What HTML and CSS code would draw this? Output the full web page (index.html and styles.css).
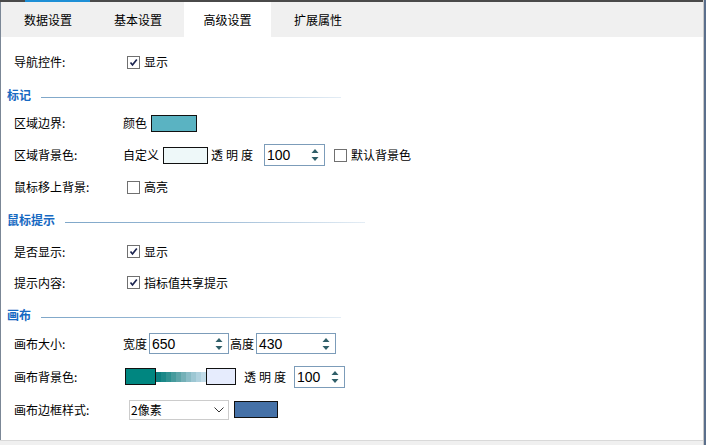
FILE: index.html
```html
<!DOCTYPE html>
<html>
<head>
<meta charset="utf-8">
<link rel="stylesheet" href="styles.css">
</head>
<body>
<div class="frame">
  <div class="topbar"><span class="topbar-accent"></span></div>
  <div class="tabs">
    <div class="tab">数据设置</div>
    <div class="tab">基本设置</div>
    <div class="tab active">高级设置</div>
    <div class="tab">扩展属性</div>
  </div>
  <div class="content">
    <div class="row">
      <div class="label">导航控件:</div>
      <span class="cb checked cb-first"><svg viewBox="0 0 11 11"><path d="M2.5 5.5 L4.5 8 L8.8 2.5"/></svg></span>
      <span class="txt">显示</span>
    </div>

    <div class="heading"><span class="htext">标记</span><span class="hline"></span></div>
    <div class="row">
      <div class="label">区域边界:</div>
      <span class="txt">颜色</span>
      <span class="swatch sw-border"></span>
    </div>
    <div class="row">
      <div class="label">区域背景色:</div>
      <span class="txt">自定义</span>
      <span class="swatch sw-bg"></span>
      <span class="txt spaced">透明度</span>
      <span class="spin spin-60"><span class="num">100</span><span class="arrows"><svg viewBox="0 0 8 14"><polygon points="0.5,5 4,1 7.5,5"/><polygon points="0.5,9 4,13 7.5,9"/></svg></span></span>
      <span class="cb cb-default"></span>
      <span class="txt">默认背景色</span>
    </div>
    <div class="row">
      <div class="label">鼠标移上背景:</div>
      <span class="cb cb-first"></span>
      <span class="txt">高亮</span>
    </div>

    <div class="heading heading-tip"><span class="htext">鼠标提示</span><span class="hline"></span></div>
    <div class="row row-tip">
      <div class="label">是否显示:</div>
      <span class="cb checked cb-first"><svg viewBox="0 0 11 11"><path d="M2.5 5.5 L4.5 8 L8.8 2.5"/></svg></span>
      <span class="txt">显示</span>
    </div>
    <div class="row row-tip">
      <div class="label">提示内容:</div>
      <span class="cb checked cb-first"><svg viewBox="0 0 11 11"><path d="M2.5 5.5 L4.5 8 L8.8 2.5"/></svg></span>
      <span class="txt">指标值共享提示</span>
    </div>

    <div class="heading"><span class="htext">画布</span><span class="hline"></span></div>
    <div class="row row-canvas">
      <div class="label">画布大小:</div>
      <span class="txt">宽度</span>
      <span class="spin spin-80 spin-tight"><span class="num">650</span><span class="arrows"><svg viewBox="0 0 8 14"><polygon points="0.5,5 4,1 7.5,5"/><polygon points="0.5,9 4,13 7.5,9"/></svg></span></span>
      <span class="txt">高度</span>
      <span class="spin spin-80 spin-tight"><span class="num">430</span><span class="arrows"><svg viewBox="0 0 8 14"><polygon points="0.5,5 4,1 7.5,5"/><polygon points="0.5,9 4,13 7.5,9"/></svg></span></span>
    </div>
    <div class="row row-canvas">
      <div class="label">画布背景色:</div>
      <span class="swatch sw-teal"></span>
      <span class="ramp"></span>
      <span class="swatch sw-light"></span>
      <span class="txt spaced spaced-wide">透明度</span>
      <span class="spin spin-50"><span class="num">100</span><span class="arrows"><svg viewBox="0 0 8 14"><polygon points="0.5,5 4,1 7.5,5"/><polygon points="0.5,9 4,13 7.5,9"/></svg></span></span>
    </div>
    <div class="row row-canvas">
      <div class="label">画布边框样式:</div>
      <span class="select"><span class="sel-text">2像素</span><svg class="chev" viewBox="0 0 10 6"><polyline points="0.5,0.5 5,5 9.5,0.5"/></svg></span>
      <span class="swatch sw-frame"></span>
    </div>
  </div>
  <div class="bottombar"></div>
</div>
</body>
</html>
```
FILE: styles.css
```css
html, body {
  margin: 0;
  padding: 0;
  background: #ffffff;
}
body {
  width: 706px;
  height: 445px;
  overflow: hidden;
  font-family: "Noto Sans CJK SC", "Liberation Sans", sans-serif;
  font-size: 12px;
  color: #000;
}
.frame {
  width: 703px;
  height: 445px;
  border-right: 1px solid #c9c9c9;
  box-shadow: 2px 0 0 #5b6f8c;
  display: flex;
  flex-direction: column;
  position: relative;
}
.topbar {
  height: 2px;
  background: #4a4a4a;
  display: flex;
}
.topbar-accent {
  margin-left: 25px;
  width: 65px;
  background: #1e8fd6;
}
.tabs {
  height: 35px;
  background: #f0f0f0;
  display: flex;
  padding-left: 2px;
  border-left: 1px solid #7b8796;
}
.tab {
  width: 90px;
  display: flex;
  align-items: center;
  justify-content: center;
  line-height: 1;
}
.tab.active {
  background: #ffffff;
  margin: 0 2px 0 1px;
  width: 87px;
}
.content {
  flex: 1;
  border-left: 1px solid #7b8796;
  padding-top: 9px;
  display: flex;
  flex-direction: column;
}
.row {
  height: 32px;
  display: flex;
  align-items: center;
  padding-left: 13px;
  line-height: 1;
  white-space: nowrap;
}
.row-tip { height: 31px; }
.row-canvas { height: 33px; }
.label {
  width: 109px;
  flex: none;
}
.txt { flex: none; }
.spaced { letter-spacing: 3px; margin-left: 3px; margin-right: 8px; }
.spaced-wide { margin-left: 8px; margin-right: 5px; }
.heading {
  height: 24px;
  margin-top: 5px;
  display: flex;
  align-items: center;
  padding-left: 6px;
}
.heading-tip { margin-bottom: 4px; }
.htext {
  color: #1769c2;
  font-weight: bold;
  line-height: 1;
}
.hline {
  margin-left: 10px;
  margin-top: 4px;
  width: 300px;
  height: 1px;
  background: linear-gradient(to right, #7fa7c9, #9dbbd6 50%, #e4edf5);
}
.cb {
  width: 11px;
  height: 11px;
  border: 1px solid #707070;
  background: #fff;
  display: inline-flex;
  flex: none;
  margin-right: 4px;
}
.cb svg { width: 11px; height: 11px; }
.cb path {
  fill: none;
  stroke: #1b2450;
  stroke-width: 1.7;
}
.cb-first { margin-left: 4px; }
.cb-default { margin-left: 9px; }
.swatch {
  display: inline-block;
  flex: none;
  border: 1px solid #111;
  box-sizing: border-box;
  height: 17px;
}
.sw-border { width: 46px; background: #5ab3c2; margin-left: 4px; }
.sw-bg { width: 45px; background: #eef8f9; margin-left: 4px; }
.sw-teal { width: 31px; background: #008680; margin-left: 2px; }
.sw-light { width: 30px; background: #e6ecfd; }
.sw-frame { width: 44px; background: #4571a7; margin-left: 5px; }
.ramp {
  width: 50px;
  height: 10px;
  flex: none;
  background: linear-gradient(to right,
    #0b7f7f 0 5px, #1a8888 5px 10px, #2f9191 10px 15px, #479b9d 15px 20px,
    #5ea5a9 20px 25px, #74b0b7 25px 30px, #8abcc6 30px 35px, #9dc7d3 35px 40px,
    #afd1de 40px 45px, #c1dbe8 45px 50px);
}
.spin {
  height: 22px;
  box-sizing: border-box;
  border: 1px solid #7c9cb9;
  display: inline-flex;
  align-items: center;
  justify-content: space-between;
  flex: none;
  background: #fff;
  padding-left: 2px;
  padding-right: 5px;
}
.spin-60 { width: 61px; }
.spin-80 { width: 80px; margin-left: 2px; margin-right: 1px; }
.spin-50 { width: 51px; }
.spin-tight { height: 21px; }
.num {
  font-family: "Liberation Sans", Arial, sans-serif;
  font-size: 14px;
  color: #000;
}
.arrows { display: inline-flex; }
.arrows svg { width: 8px; height: 14px; }
.arrows polygon { fill: #2f5e68; }
.select {
  width: 100px;
  height: 20px;
  box-sizing: border-box;
  border: 1px solid #cccccc;
  display: inline-flex;
  align-items: center;
  justify-content: space-between;
  margin-left: 6px;
  padding-left: 1px;
  padding-right: 4px;
  flex: none;
}
.sel-text { font-size: 12px; }
.chev { width: 10px; height: 6px; }
.chev polyline { fill: none; stroke: #333; stroke-width: 1; }
.bottombar {
  height: 4px;
  border-top: 1px solid #d9d9d9;
  background: #f0f0f0;
}
```
